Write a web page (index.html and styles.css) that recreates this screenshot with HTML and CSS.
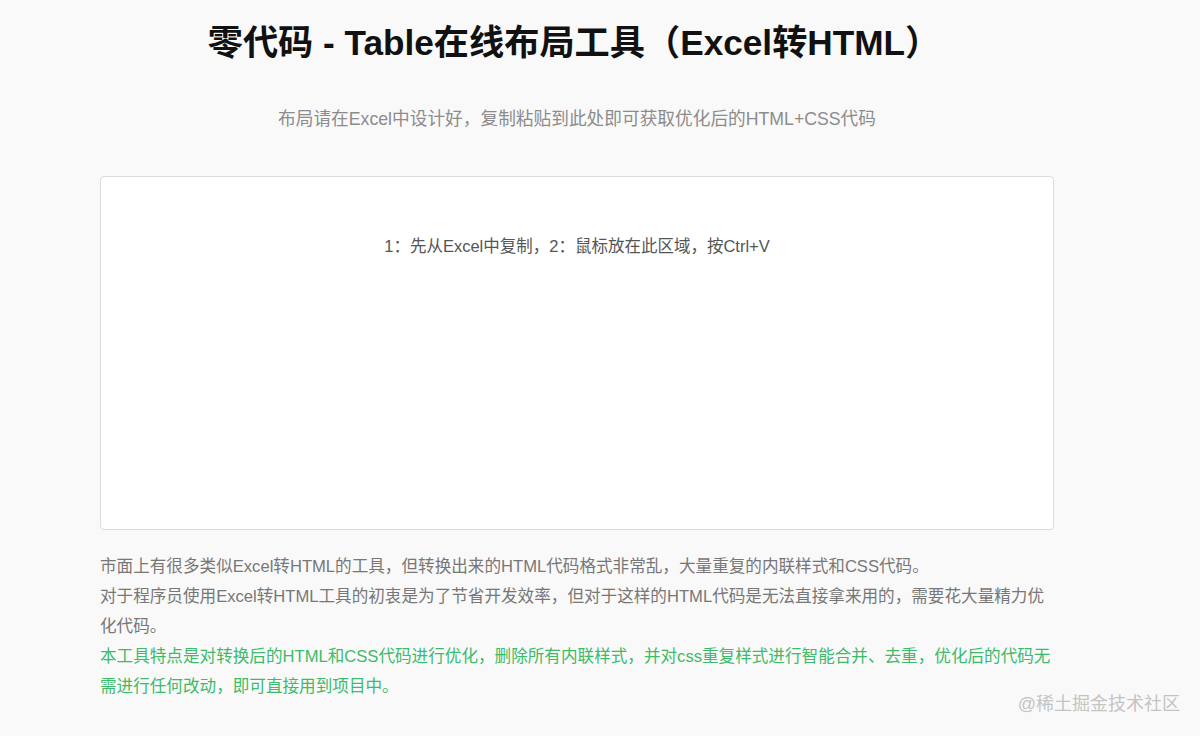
FILE: index.html
```html
<!DOCTYPE html>
<html lang="zh-CN">
<head>
<meta charset="utf-8">
<title>零代码 - Table在线布局工具</title>
<link rel="stylesheet" href="styles.css">
</head>
<body>
<main class="page">
  <h1 class="title">零代码 - Table在线布局工具（Excel转HTML）</h1>
  <p class="subtitle">布局请在Excel中设计好，复制粘贴到此处即可获取优化后的HTML+CSS代码</p>
  <div class="paste-box">
    <p class="placeholder">1：先从Excel中复制，2：鼠标放在此区域，按Ctrl+V</p>
  </div>
  <div class="desc">
    <p>市面上有很多类似Excel转HTML的工具，但转换出来的HTML代码格式非常乱，大量重复的内联样式和CSS代码。</p>
    <p>对于程序员使用Excel转HTML工具的初衷是为了节省开发效率，但对于这样的HTML代码是无法直接拿来用的，需要花大量精力优化代码。</p>
    <p class="highlight">本工具特点是对转换后的HTML和CSS代码进行优化，删除所有内联样式，并对css重复样式进行智能合并、去重，优化后的代码无需进行任何改动，即可直接用到项目中。</p>
  </div>
</main>
<div class="watermark">@稀土掘金技术社区</div>
</body>
</html>
```
FILE: styles.css
```css
html, body {
  margin: 0;
  padding: 0;
}
body {
  background: #f9f9f9;
  font-family: "Liberation Sans", Arial, "Noto Sans CJK SC", sans-serif;
  height: 736px;
  overflow: hidden;
  position: relative;
}
.page {
  width: 954px;
  margin-left: 100px;
  padding-top: 21px;
}
.title {
  margin: 0;
  font-size: 35.2px;
  line-height: 44px;
  font-weight: bold;
  color: #111;
  text-align: center;
  padding-right: 6px;
}
.subtitle {
  margin: 42px 0 0;
  font-size: 17.7px;
  line-height: 24px;
  color: #8c8c8c;
  text-align: center;
}
.paste-box {
  margin-top: 45px;
  height: 352px;
  background: #fff;
  border: 1px solid #dcdcdc;
  border-radius: 4px;
}
.placeholder {
  margin: 57px 0 0;
  font-size: 16.5px;
  line-height: 24px;
  color: #555;
  text-align: center;
}
.desc {
  margin-top: 22px;
  font-size: 16.6px;
  line-height: 30px;
  color: #777;
}
.desc p {
  margin: 0;
}
.desc .highlight {
  color: #3dba6a;
}
.watermark {
  position: absolute;
  right: 20px;
  bottom: 20px;
  font-size: 18px;
  line-height: 24px;
  color: #c4c4c4;
}
```
